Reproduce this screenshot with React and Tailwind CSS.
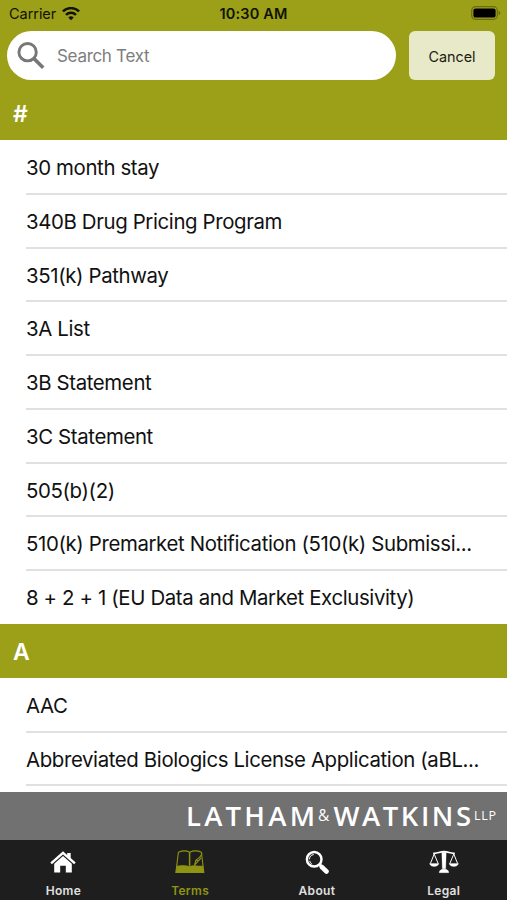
import React from 'react';

const sections = [
    {
        letter: '#',
        terms: [
            '30 month stay',
            '340B Drug Pricing Program',
            '351(k) Pathway',
            '3A List',
            '3B Statement',
            '3C Statement',
            '505(b)(2)',
            '510(k) Premarket Notification (510(k) Submissi...',
            '8 + 2 + 1 (EU Data and Market Exclusivity)',
        ],
    },
    {
        letter: 'A',
        terms: ['AAC', 'Abbreviated Biologics License Application (aBL...', ''],
    },
];

const WifiIcon = () => (
    <svg className="w-[18px] h-[14px]" viewBox="0 0 18 14" fill="none" stroke="#111204" strokeWidth="2.5">
        <path d="M0.9 4.4a11.6 11.6 0 0 1 16.2 0" />
        <path d="M4 7.8a7.2 7.2 0 0 1 10 0" />
        <path d="M9 13.3L6.3 10.6a3.9 3.9 0 0 1 5.4 0z" fill="#111204" stroke="none" />
    </svg>
);

const BatteryIcon = () => (
    <svg className="w-[30px] h-[14px]" viewBox="0 0 30 14">
        <rect x="0.7" y="0.7" width="25.6" height="12.6" rx="3.8" fill="none" stroke="#6a6d12" strokeWidth="1.2" />
        <rect x="2.4" y="2.4" width="22.2" height="9.2" rx="2.2" fill="#000" />
        <path d="M27.6 4.8c2.4 0.8 2.4 3.6 0 4.4z" fill="#6a6d12" />
    </svg>
);

const SearchIcon = () => (
    <svg className="w-[28px] h-[28px] shrink-0" viewBox="0 0 28 28" fill="none" stroke="#777">
        <circle cx="10.6" cy="10.2" r="8.7" strokeWidth="2.9" />
        <path d="M16.9 16.5l9.3 9.3" strokeWidth="3.6" />
    </svg>
);

const HomeIcon = () => (
    <svg className="w-[26px] h-[24px]" viewBox="0 0 26 24" fill="#fff">
        <path d="M13 1.2L17.2 4.9V3h3.5v5l5 4.4-1.6 1.8L13 4.4 1.9 14.2 0.3 12.4z" />
        <path d="M13 6.1l8.8 7.7v8.7h-6v-6.7h-5.6v6.7h-6v-8.7z" />
    </svg>
);

const TermsIcon = () => (
    <svg className="w-[30px] h-[24px]" viewBox="0 0 30 24" fill="none" stroke="#8f9413" strokeWidth="1.1">
        <path d="M3.4 2.3C7 0.7 11.7 0.7 14.6 2.3 18 0.7 23 0.7 26.4 2.3L28.8 22.4H0.9z" />
        <path d="M14.6 2.3v14" strokeWidth="1.5" />
        <path d="M2.4 16.2c4.6-0.6 9.2-0.5 12.2 0.9 2.7-1.4 5.6-1.5 8-0.9l4.9 0.2 0.9 5.9H1.3z" fill="#8f9413" />
        <path d="M27 3.2c-1.2 3.8-2.5 5.1-6 6.8l-1.5 5.2 6.6-7.4M21 10l2 0.7" />
    </svg>
);

const AboutIcon = () => (
    <svg className="w-[24px] h-[24px]" viewBox="0 0 24 24" fill="none" stroke="#fff">
        <circle cx="9.2" cy="9.3" r="7.3" strokeWidth="2.5" />
        <path d="M4.5 9.3a4.8 4.8 0 0 1 4.2-4.7M4.7 10.9c0.5 1.7 1.3 2.5 2.4 3" strokeWidth="1" />
        <path d="M14.6 14.6l2.6 2.6" strokeWidth="2.8" />
        <path d="M16.8 17l4.7 4.5" strokeWidth="4.6" strokeLinecap="round" />
    </svg>
);

const LegalIcon = () => (
    <svg className="w-[30px] h-[24px]" viewBox="0 0 30 24" fill="#fff" stroke="#fff">
        <path d="M4.2 3.2C8 4.1 10.5 1.6 15 1.6s7 2.5 10.8 1.6" fill="none" strokeWidth="1.6" />
        <path d="M12.8 2.3h4.4l-0.5 16.4h-3.4zM10.2 22.7c0-2.5 2-3.5 4.8-3.7 2.8 0.2 4.8 1.2 4.8 3.7z" strokeWidth="0.3" />
        <path d="M5.2 4L1.4 13.6M5.2 4l4 9.6M24.8 4l-4 9.6M24.8 4l3.8 9.6" fill="none" strokeWidth="1" />
        <path d="M0.5 13.6h9.4c-1 4-8.4 4-9.4 0zM20.1 13.6h9.4c-1 4-8.4 4-9.4 0z" strokeWidth="0.3" />
    </svg>
);

const tabs = [
    { label: 'Home', Icon: HomeIcon },
    { label: 'Terms', Icon: TermsIcon, active: true },
    { label: 'About', Icon: AboutIcon },
    { label: 'Legal', Icon: LegalIcon },
];

const StatusBar = () => (
    <div className="grid grid-cols-3 items-center h-[28px] pl-[9px] pr-[6px] text-[14.5px] text-[#111204]">
        <div className="flex items-center gap-[6px]">
            <span className="tracking-[-0.05px]">Carrier</span>
            <WifiIcon />
        </div>
        <span className="text-center font-semibold whitespace-nowrap tracking-[0.15px] pr-[3px]">10:30 AM</span>
        <div className="flex justify-end pb-[2px]">
            <BatteryIcon />
        </div>
    </div>
);

const SearchBar = () => (
    <div className="flex gap-[13px] h-[49px] mt-[3px] pl-[7px] pr-[12px]">
        <div className="flex items-center flex-1 rounded-full bg-white pl-[10px]">
            <SearchIcon />
            <span className="ml-[12px] pt-[2px] text-[17px] tracking-[-0.3px] text-[#7d7d7d]">Search Text</span>
        </div>
        <button className="w-[86px] rounded-[6px] bg-[#e8e9c8] pt-[2px] text-[14.4px] text-[#1c1c14]">Cancel</button>
    </div>
);

const TermSection = ({ letter, terms }) => (
    <section>
        <h2 className="flex items-center h-[54px] pt-[2px] pl-[13px] bg-[#9c9f18] text-white text-[23px] font-semibold">
            {letter}
        </h2>
        <ul className="pl-[26px] pt-px -mb-px">
            {terms.map((term, i) => (
                <li
                    key={i}
                    className="flex items-center h-[53.75px] pt-[3px] border-b-2 border-[#e0e0e0] last:border-transparent text-[20.4px] text-[#111] tracking-[-0.37px] whitespace-nowrap"
                >
                    {term}
                </li>
            ))}
        </ul>
    </section>
);

const Brand = () => (
    <div className="flex justify-end h-[48px] shrink-0 bg-[#717171]">
        <svg className="w-[330px] h-[48px] font-['Open_Sans']" viewBox="177 0 330 48" fill="#fff">
            <text x="186" y="33.6" fontSize="27.5" fontWeight="600" textLength="129" lengthAdjust="spacing">LATHAM</text>
            <text x="318" y="29" fontSize="15.5">&amp;</text>
            <text x="333.5" y="33.6" fontSize="27.5" fontWeight="600" textLength="137.5" lengthAdjust="spacing">WATKINS</text>
            <text x="474" y="28" fontSize="12.5" textLength="22" lengthAdjust="spacing">LLP</text>
        </svg>
    </div>
);

const App = () => {
    return (
        <div className="flex flex-col w-[507px] h-[900px] overflow-hidden bg-white font-['Inter',sans-serif]">
            <header className="h-[86px] shrink-0 bg-[#9c9f18]">
                <StatusBar />
                <SearchBar />
            </header>
            <main className="flex-1 min-h-0 overflow-hidden">
                {sections.map(section => (
                    <TermSection key={section.letter} {...section} />
                ))}
            </main>
            <Brand />
            <nav className="grid grid-cols-4 h-[60px] shrink-0 bg-[#1e1e1e]">
                {tabs.map(({ label, Icon, active }) => (
                    <div
                        key={label}
                        className={`flex flex-col items-center pt-[10px] text-[12px] font-semibold tracking-[0.3px] ${active ? 'text-[#8f9413]' : 'text-[#e0e0e0]'}`}
                    >
                        <Icon />
                        <span className="mt-[8px] leading-[18px]">{label}</span>
                    </div>
                ))}
            </nav>
        </div>
    );
};

export default App;
